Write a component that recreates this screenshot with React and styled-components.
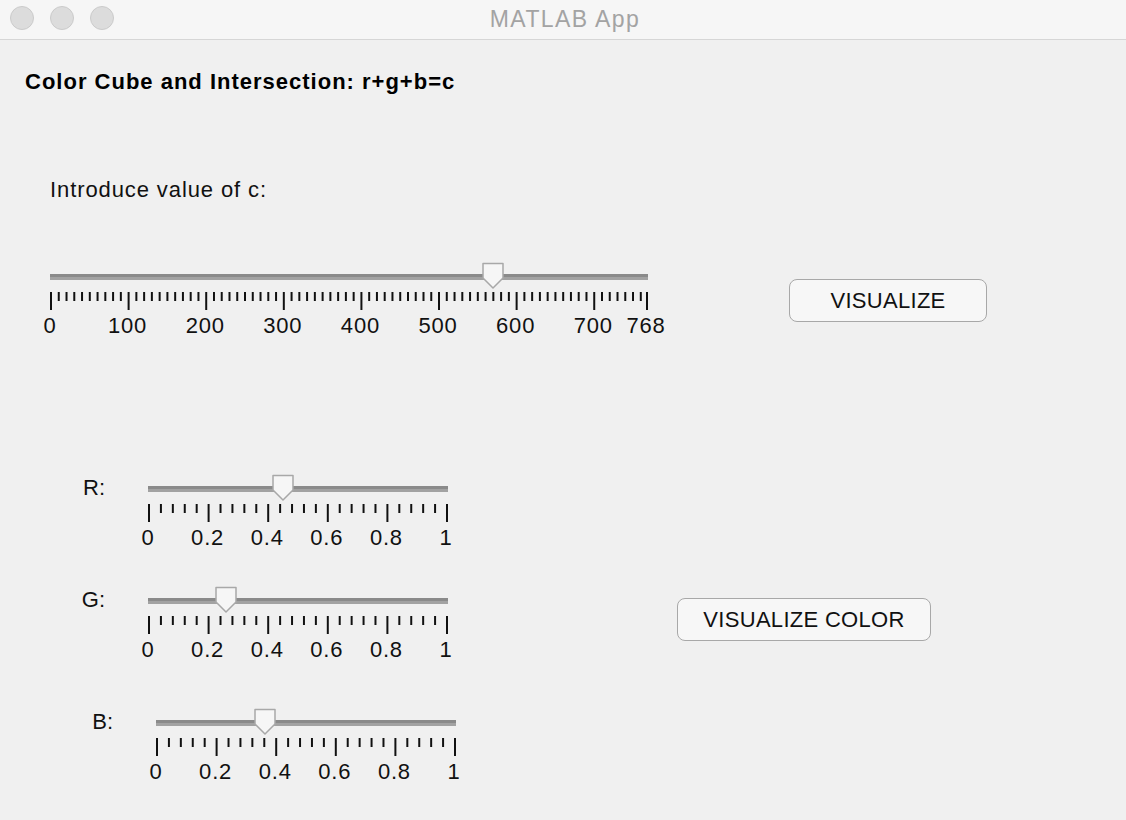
import React from "react";
import styled, { createGlobalStyle } from "styled-components";

const GlobalStyle = createGlobalStyle`
  html, body {
    margin: 0;
    padding: 0;
    background: #f0f0f0;
  }
  body {
    font-family: "Liberation Sans", Arial, Helvetica, sans-serif;
    color: #111;
  }
`;

const Window = styled.div`
  width: 1126px;
  height: 820px;
  display: flex;
  flex-direction: column;
  background: #f0f0f0;
  overflow: hidden;
`;

const TitleBar = styled.div`
  position: relative;
  height: 39px;
  flex-shrink: 0;
  background: #f6f6f6;
  border-bottom: 1px solid #d6d6d6;
  display: flex;
  align-items: center;
  justify-content: center;
`;

const Lights = styled.div`
  position: absolute;
  left: 10px;
  top: 6px;
  display: flex;
  gap: 16px;
`;

const Light = styled.span`
  width: 22px;
  height: 22px;
  border-radius: 50%;
  background: #dcdcdc;
  border: 1px solid #cbcbcb;
`;

const WindowTitle = styled.div`
  font-size: 23px;
  letter-spacing: 1.4px;
  color: #a3a3a3;
  margin-left: 4px;
`;

const Content = styled.div`
  flex: 1;
  padding-left: 25px;
  display: flex;
  flex-direction: column;
`;

const Heading = styled.h1`
  margin: 29px 0 0;
  font-size: 22px;
  line-height: 26px;
  font-weight: bold;
  letter-spacing: 1px;
  color: #000;
`;

const Section = styled.div`
  display: flex;
  align-items: flex-start;
  margin-top: ${(p) => p.$top}px;
`;

const SliderColumn = styled.div`
  display: flex;
  flex-direction: column;
  width: ${(p) => p.$width}px;
  margin-left: ${(p) => p.$indent || 0}px;
  flex-shrink: 0;
`;

const Prompt = styled.div`
  font-size: 22px;
  line-height: 26px;
  letter-spacing: 0.9px;
  color: #111;
  margin-bottom: 59px;
`;

const Button = styled.button`
  flex-shrink: 0;
  height: 43px;
  width: ${(p) => p.$width}px;
  margin-top: ${(p) => p.$top}px;
  margin-left: ${(p) => p.$left}px;
  background: #f7f7f7;
  border: 1.5px solid #a8a8a8;
  border-radius: 8px;
  font-family: "Liberation Sans", Arial, sans-serif;
  font-size: 22px;
  letter-spacing: 0.3px;
  color: #111;
  padding: 0;
  cursor: pointer;
`;

const ColorRow = styled.div`
  display: flex;
  align-items: flex-start;
  margin-top: ${(p) => p.$top}px;
  margin-left: ${(p) => p.$shift || 0}px;
`;

const ChannelLabel = styled.div`
  width: 80px;
  text-align: right;
  margin-right: 43px;
  margin-top: 1px;
  font-size: 22px;
  line-height: 26px;
  color: #111;
`;

const SliderBox = styled.div`
  position: relative;
  width: ${(p) => p.$width}px;
  height: 78px;
  flex-shrink: 0;
`;

const Track = styled.div`
  position: absolute;
  left: 0;
  right: 0;
  top: 12px;
  height: 6px;
  background: linear-gradient(#8a8a8a 0 50%, #a2a2a2 50% 100%);
`;

const ThumbSvg = styled.svg`
  position: absolute;
  top: 0;
`;

const Scale = styled.svg`
  position: absolute;
  left: 0;
  top: 30px;
`;

const TickLabel = styled.span`
  position: absolute;
  top: 51px;
  transform: translateX(-50%);
  font-size: 22px;
  line-height: 26px;
  letter-spacing: 0.8px;
  color: #111;
  white-space: nowrap;
`;

function Slider({ width, max, value, major, minor, labels, fmt }) {
  const pos = (v) => 1 + (v / max) * (width - 2);
  const ticks = [];
  const steps = Math.round(max / minor);
  for (let i = 0; i <= steps; i++) {
    const v = Math.min(i * minor, max);
    const isMajor = Math.abs(v / major - Math.round(v / major)) < 1e-6;
    ticks.push({ v, isMajor });
  }
  if (ticks[ticks.length - 1].v < max) ticks.push({ v: max, isMajor: true });
  else ticks[ticks.length - 1].isMajor = true;

  const tx = pos(value);
  return (
    <SliderBox $width={width}>
      <Track />
      <Scale width={width + 2} height={20}>
        {ticks.map((t, i) => (
          <line
            key={i}
            x1={pos(t.v)}
            x2={pos(t.v)}
            y1={0}
            y2={t.isMajor ? 18 : 9}
            stroke="#111"
            strokeWidth={2}
          />
        ))}
      </Scale>
      <ThumbSvg width={24} height={28} style={{ left: tx - 12 }}>
        <path
          d="M2 1.5 H22 V16 L12 26 L2 16 Z"
          fill="#f6f6f6"
          stroke="#a8a8a8"
          strokeWidth={1.5}
          strokeLinejoin="round"
        />
      </ThumbSvg>
      {labels.map((l) => (
        <TickLabel key={l} style={{ left: pos(l) - 1 }}>
          {fmt ? fmt(l) : l}
        </TickLabel>
      ))}
    </SliderBox>
  );
}

const unitLabels = [0, 0.2, 0.4, 0.6, 0.8, 1];
const fmtUnit = (v) => (v === 0 || v === 1 ? String(v) : v.toFixed(1));

function ColorSlider({ label, value, top, shift }) {
  return (
    <ColorRow $top={top} $shift={shift}>
      <ChannelLabel>{label}</ChannelLabel>
      <Slider
        width={300}
        max={1}
        value={value}
        major={0.2}
        minor={0.04}
        labels={unitLabels}
        fmt={fmtUnit}
      />
    </ColorRow>
  );
}

export default function App() {
  return (
    <>
      <GlobalStyle />
      <Window>
        <TitleBar>
          <Lights>
            <Light />
            <Light />
            <Light />
          </Lights>
          <WindowTitle>MATLAB App</WindowTitle>
        </TitleBar>
        <Content>
          <Heading>Color Cube and Intersection: r+g+b=c</Heading>

          <Section $top={82}>
            <SliderColumn $width={598} $indent={25}>
              <Prompt>Introduce value of c:</Prompt>
              <Slider
                width={598}
                max={768}
                value={569}
                major={100}
                minor={10}
                labels={[0, 100, 200, 300, 400, 500, 600, 700, 768]}
              />
            </SliderColumn>
            <Button $width={198} $top={102} $left={141}>
              VISUALIZE
            </Button>
          </Section>

          <Section $top={134}>
            <SliderColumn $width={431}>
              <ColorSlider label="R:" value={0.45} top={0} />
              <ColorSlider label="G:" value={0.257} top={34} />
              <ColorSlider label="B:" value={0.363} top={44} shift={8} />
            </SliderColumn>
            <Button $width={254} $top={124} $left={221}>
              VISUALIZE COLOR
            </Button>
          </Section>
        </Content>
      </Window>
    </>
  );
}
